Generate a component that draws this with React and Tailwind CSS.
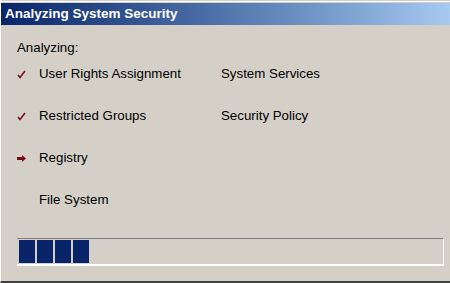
import React from "react";

function Check() {
  return (
    <svg width="9" height="9" viewBox="0 0 9 9" className="block">
      <path d="M1 5 L3 7.5 L8 1" stroke="#7a1020" strokeWidth="1.6" fill="none" />
    </svg>
  );
}

function Arrow() {
  return (
    <svg width="9" height="7" viewBox="0 0 9 7" className="block">
      <path d="M0 2 H5 V0 L9 3.5 L5 7 V5 H0 Z" fill="#7a0a14" />
    </svg>
  );
}

function Row({ icon, text, right }) {
  return (
    <div className="flex items-center h-[42px]">
      <div className="w-[22px] flex justify-start">{icon}</div>
      <div className="w-[182px]">{text}</div>
      <div>{right}</div>
    </div>
  );
}

export default function App() {
  return (
    <div
      className="w-[450px] h-[283px] bg-[#D4D0C8] flex flex-col border-l border-l-white border-b-2 border-b-[#404040]"
      style={{ fontFamily: '"Liberation Sans", Arial, sans-serif' }}
    >
      <div className="h-[1px] bg-[#D4D0C8]" />
      <div className="h-[1px] bg-white" />
      <div className="h-[1px] bg-[#D4D0C8]" />
      <div className="h-[22px] bg-gradient-to-r from-[#0A246A] to-[#A6CAF0] flex items-center pl-[4px] text-white font-bold text-[13.5px]">
        Analyzing System Security
      </div>
      <div className="flex-1 flex flex-col pl-[16px] text-[13.3px] text-black">
        <div className="h-[22px] mt-[12px] flex items-center">Analyzing:</div>
        <div className="-mt-[6px]">
          <Row icon={<Check />} text="User Rights Assignment" right="System Services" />
          <Row icon={<Check />} text="Restricted Groups" right="Security Policy" />
          <Row icon={<Arrow />} text="Registry" right="" />
          <Row icon={null} text="File System" right="" />
        </div>
        <div className="mt-[17px] w-[427px] h-[28px] border-t border-t-[#808080] border-r border-r-white border-b-2 border-b-white flex items-stretch pl-[2px] pt-[1px] pb-[1px] gap-[2px]">
          <div className="w-[16px] bg-[#0A246A]" />
          <div className="w-[16px] bg-[#0A246A]" />
          <div className="w-[16px] bg-[#0A246A]" />
          <div className="w-[16px] bg-[#0A246A]" />
        </div>
      </div>
    </div>
  );
}
